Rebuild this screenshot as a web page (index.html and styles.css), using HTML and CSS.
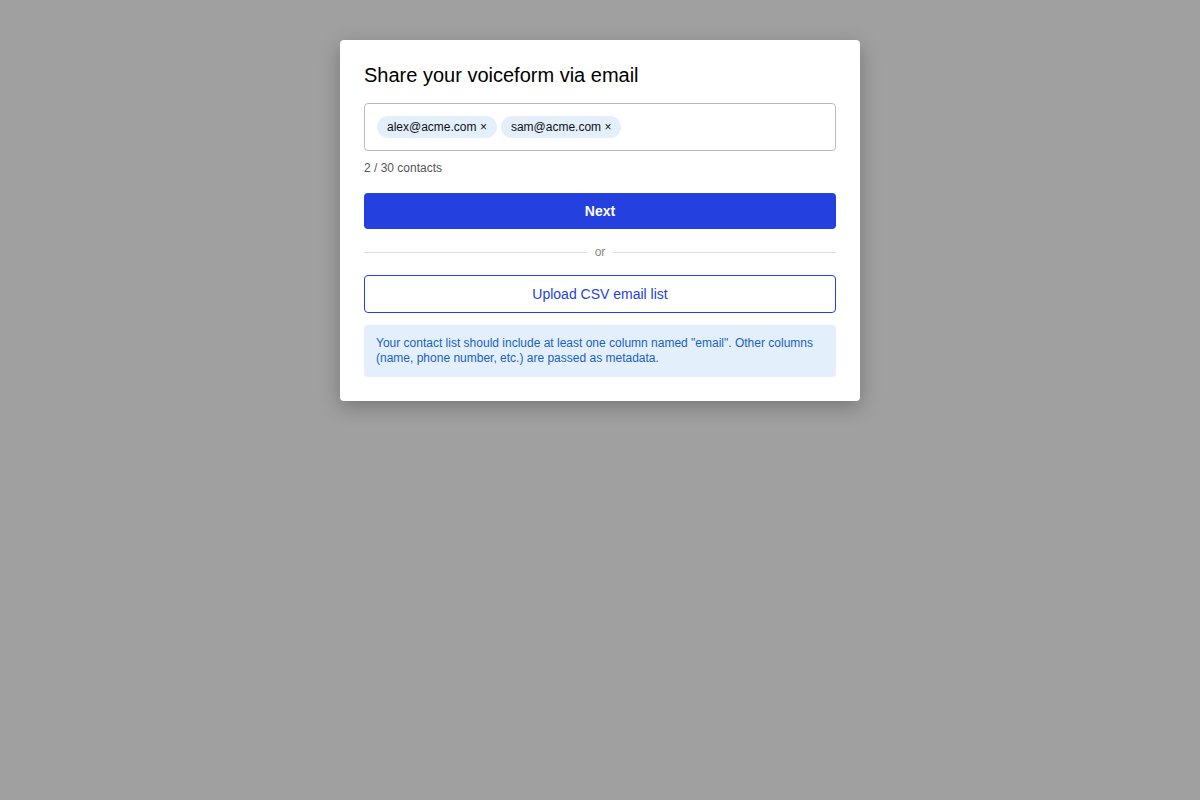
FILE: index.html
```html
<!DOCTYPE html>
<html>
<head>
<meta charset="utf-8">
<link rel="stylesheet" href="styles.css">
</head>
<body>
<div class="overlay">
  <div class="modal">
    <h2 class="title">Share your voiceform via email</h2>
    <div class="email-input">
      <span class="chip">alex@acme.com <span class="x">×</span></span>
      <span class="chip">sam@acme.com <span class="x">×</span></span>
    </div>
    <div class="count">2 / 30 contacts</div>
    <button class="btn-primary">Next</button>
    <div class="divider"><span class="line"></span><span class="or">or</span><span class="line"></span></div>
    <button class="btn-outline">Upload CSV email list</button>
    <div class="info">Your contact list should include at least one column named "email". Other columns (name, phone number, etc.) are passed as metadata.</div>
  </div>
</div>
</body>
</html>
```

FILE: styles.css
```css
* { box-sizing: border-box; }
html, body { margin: 0; padding: 0; }
body {
  background: #a0a0a0;
  font-family: "Liberation Sans", Arial, sans-serif;
  width: 1200px;
  height: 800px;
}
.overlay {
  display: flex;
  justify-content: center;
  padding-top: 40px;
}
.modal {
  width: 520px;
  background: #fff;
  border-radius: 4px;
  padding: 24px;
  box-shadow: 0 6px 20px rgba(0,0,0,0.25);
  display: flex;
  flex-direction: column;
}
.title {
  margin: 0 0 17px 0;
  font-size: 20px;
  font-weight: normal;
  line-height: 22px;
  color: #000;
}
.email-input {
  height: 48px;
  border: 1px solid #b9b9b9;
  border-radius: 4px;
  display: flex;
  align-items: center;
  gap: 4px;
  padding: 0 12px;
}
.chip {
  height: 22px;
  line-height: 22px;
  background: #e3f0fc;
  border-radius: 11px;
  padding: 0 10px;
  font-size: 12px;
  color: #111;
}
.chip .x { font-size: 12px; }
.count {
  margin-top: 9px;
  font-size: 12px;
  line-height: 16px;
  color: #555;
}
.btn-primary {
  margin-top: 17px;
  height: 36px;
  border: none;
  border-radius: 4px;
  background: #2441e0;
  color: #fff;
  font-family: inherit;
  font-size: 14px;
  font-weight: 600;
}
.divider {
  margin-top: 15px;
  height: 16px;
  display: flex;
  align-items: center;
  gap: 8px;
}
.divider .line {
  flex: 1;
  height: 1px;
  background: #dcdcdc;
}
.divider .or {
  font-size: 12px;
  color: #888;
  line-height: 16px;
}
.btn-outline {
  margin-top: 15px;
  height: 38px;
  border: 1px solid #2441e0;
  border-radius: 4px;
  background: #fff;
  color: #2441e0;
  font-family: inherit;
  font-size: 14px;
}
.info {
  margin-top: 12px;
  background: #e3f0fc;
  border-radius: 4px;
  padding: 11px 12px;
  font-size: 12px;
  line-height: 15px;
  color: #1a5fc4;
}
```
